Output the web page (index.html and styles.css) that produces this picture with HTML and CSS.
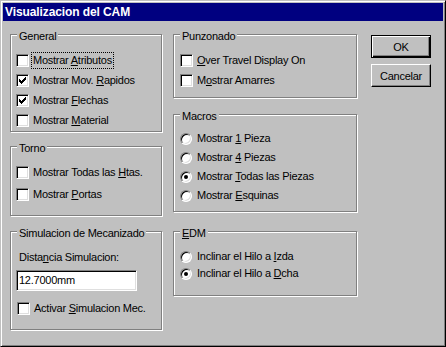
FILE: index.html
```html
<!DOCTYPE html>
<html lang="es">
<head>
  <meta charset="UTF-8">
  <title>Visualizacion del CAM</title>
  <link rel="stylesheet" href="styles.css">
</head>
<body>
  <div class="window">
    <div class="titlebar">Visualizacion del CAM</div>
    <div class="dialog">
      <div class="col col-left">
        <div class="group group-general">
          <span class="group-title">General</span>
          <div class="check"><span class="box"></span><span class="text focus">Mostrar <u>A</u>tributos</span></div>
          <div class="check"><span class="box"><svg class="tick" width="11" height="11" viewBox="0 0 11 11"><path d="M2 4h1v3H2z M3 5h1v3H3z M4 6h1v3H4z M5 5h1v3H5z M6 4h1v3H6z M7 3h1v3H7z M8 2h1v3H8z"/></svg></span><span class="text">Mostrar Mov. <u>R</u>apidos</span></div>
          <div class="check"><span class="box"><svg class="tick" width="11" height="11" viewBox="0 0 11 11"><path d="M2 4h1v3H2z M3 5h1v3H3z M4 6h1v3H4z M5 5h1v3H5z M6 4h1v3H6z M7 3h1v3H7z M8 2h1v3H8z"/></svg></span><span class="text">Mostrar <u>F</u>lechas</span></div>
          <div class="check"><span class="box"></span><span class="text">Mostrar <u>M</u>aterial</span></div>
        </div>

        <div class="group group-torno">
          <span class="group-title">Torno</span>
          <div class="check"><span class="box"></span><span class="text">Mostrar Todas las <u>H</u>tas.</span></div>
          <div class="check"><span class="box"></span><span class="text">Mostrar <u>P</u>ortas</span></div>
        </div>

        <div class="group group-sim">
          <span class="group-title">Simulacion de Mecanizado</span>
          <div class="field-label">Dista<u>n</u>cia Simulacion:</div>
          <input class="field" type="text" value="12.7000mm">
          <div class="check"><span class="box"></span><span class="text">Activar <u>S</u>imulacion Mec.</span></div>
        </div>
      </div>

      <div class="col col-mid">
        <div class="group group-punz">
          <span class="group-title">Punzonado</span>
          <div class="check"><span class="box"></span><span class="text"><u>O</u>ver Travel Display On</span></div>
          <div class="check"><span class="box"></span><span class="text">M<u>o</u>strar Amarres</span></div>
        </div>

        <div class="group group-macros">
          <span class="group-title">Macros</span>
          <div class="check"><span class="radio"></span><span class="text">Mostrar <u>1</u> Pieza</span></div>
          <div class="check"><span class="radio"></span><span class="text">Mostrar <u>4</u> Piezas</span></div>
          <div class="check"><span class="radio on"></span><span class="text">Mostrar <u>T</u>odas las Piezas</span></div>
          <div class="check"><span class="radio"></span><span class="text">Mostrar <u>E</u>squinas</span></div>
        </div>

        <div class="group group-edm">
          <span class="group-title"><u>E</u>DM</span>
          <div class="check"><span class="radio"></span><span class="text">Inclinar el Hilo a <u>I</u>zda</span></div>
          <div class="check"><span class="radio on"></span><span class="text">Inclinar el Hilo a <u>D</u>cha</span></div>
        </div>
      </div>

      <div class="col col-buttons">
        <button class="btn btn-default">OK</button>
        <button class="btn">Cancelar</button>
      </div>
    </div>
  </div>
</body>
</html>
```

FILE: styles.css
```css
* {
    margin: 0;
    padding: 0;
    box-sizing: border-box;
}

body {
    background: #c0c0c0;
    font-family: 'Liberation Sans', Arial, sans-serif;
    font-size: 11px;
    letter-spacing: -0.25px;
    color: #000;
}

.window {
    width: 446px;
    height: 347px;
    background: #c0c0c0;
    border: 1px solid;
    border-color: #c0c0c0 #000 #000 #c0c0c0;
    box-shadow: inset 1px 1px 0 #fff, inset -1px -1px 0 #808080;
    padding: 2px;
}

.titlebar {
    height: 18px;
    line-height: 18px;
    padding-left: 2px;
    background: #000080;
    color: #fff;
    font-weight: bold;
    font-size: 12px;
    letter-spacing: -0.1px;
}

.dialog {
    display: flex;
    padding: 13px 0 0 7px;
}

.col {
    display: flex;
    flex-direction: column;
}

.col-left {
    width: 152px;
}

.col-mid {
    width: 184px;
    margin-left: 11px;
}

.col-buttons {
    width: 60px;
    margin-left: 14px;
    padding-top: 1px;
}

/* etched group box */
.group {
    position: relative;
    border: 1px solid #808080;
    box-shadow: 1px 1px 0 #fff, inset 1px 1px 0 #fff;
    display: flex;
    flex-direction: column;
}

.group-title {
    position: absolute;
    top: -6px;
    left: 6px;
    padding: 0 2px;
    line-height: 14px;
    background: #c0c0c0;
}

.group-general {
    height: 98px;
    padding: 17px 0 0 5px;
    gap: 3px;
}

.group-torno {
    height: 70px;
    margin-top: 14px;
    padding: 17px 0 0 5px;
    gap: 5px;
}

.group-sim {
    height: 99px;
    margin-top: 15px;
    padding: 19px 0 0 5px;
}

.group-punz {
    height: 64px;
    padding: 17px 0 0 6px;
    gap: 3px;
}

.group-macros {
    height: 98px;
    margin-top: 16px;
    padding: 15px 0 0 6px;
    gap: 2px;
}

.group-edm {
    height: 65px;
    margin-top: 19px;
    padding: 16px 0 0 6px;
}

/* check box and radio rows */
.check {
    display: flex;
    align-items: flex-start;
    height: 17px;
}

.text {
    line-height: 17px;
    padding: 0 1px;
    margin-left: 3px;
    white-space: nowrap;
}

.text.focus {
    line-height: 13px;
    padding: 1px;
    margin-top: 1px;
    outline: 1px dotted #000;
}

.box {
    flex: none;
    width: 13px;
    height: 13px;
    margin-top: 2px;
    background: #fff;
    border: 1px solid;
    border-color: #808080 #fff #fff #808080;
    box-shadow: inset 1px 1px 0 #000, inset -1px -1px 0 #dfdfdf;
}

.tick {
    display: block;
    shape-rendering: crispEdges;
}

.radio {
    flex: none;
    position: relative;
    width: 12px;
    height: 12px;
    margin-top: 3px;
    margin-right: 1px;
    border-radius: 50%;
    background: #fff;
    border: 1px solid;
    border-color: #808080 #fff #fff #808080;
    box-shadow: inset 1px 1px 0 #000, inset -1px -1px 0 #dfdfdf;
}

.radio.on::after {
    content: '';
    position: absolute;
    left: 3px;
    top: 3px;
    width: 4px;
    height: 4px;
    border-radius: 50%;
    background: #000;
}

/* edit field */
.field-label {
    line-height: 13px;
    padding-left: 3px;
}

.field {
    width: 121px;
    height: 21px;
    margin-top: 6px;
    margin-bottom: 9px;
    padding: 0 0 2px 2px;
    font: inherit;
    letter-spacing: inherit;
    color: #000;
    background: #fff;
    border: 1px solid;
    border-color: #808080 #fff #fff #808080;
    box-shadow: inset 1px 1px 0 #000, inset -1px -1px 0 #dfdfdf;
    outline: none;
}

.group-sim .check {
    margin-left: 1px;
}

/* push buttons */
.btn {
    width: 60px;
    height: 23px;
    font: inherit;
    letter-spacing: inherit;
    color: #000;
    background: #c0c0c0;
    border: 1px solid;
    border-color: #fff #000 #000 #fff;
    box-shadow: inset -1px -1px 0 #808080;
}

.btn + .btn {
    margin-top: 6px;
}

.btn-default {
    border-color: #000;
    box-shadow: inset 1px 1px 0 #fff, inset -1px -1px 0 #000, inset -2px -2px 0 #808080;
}
```
